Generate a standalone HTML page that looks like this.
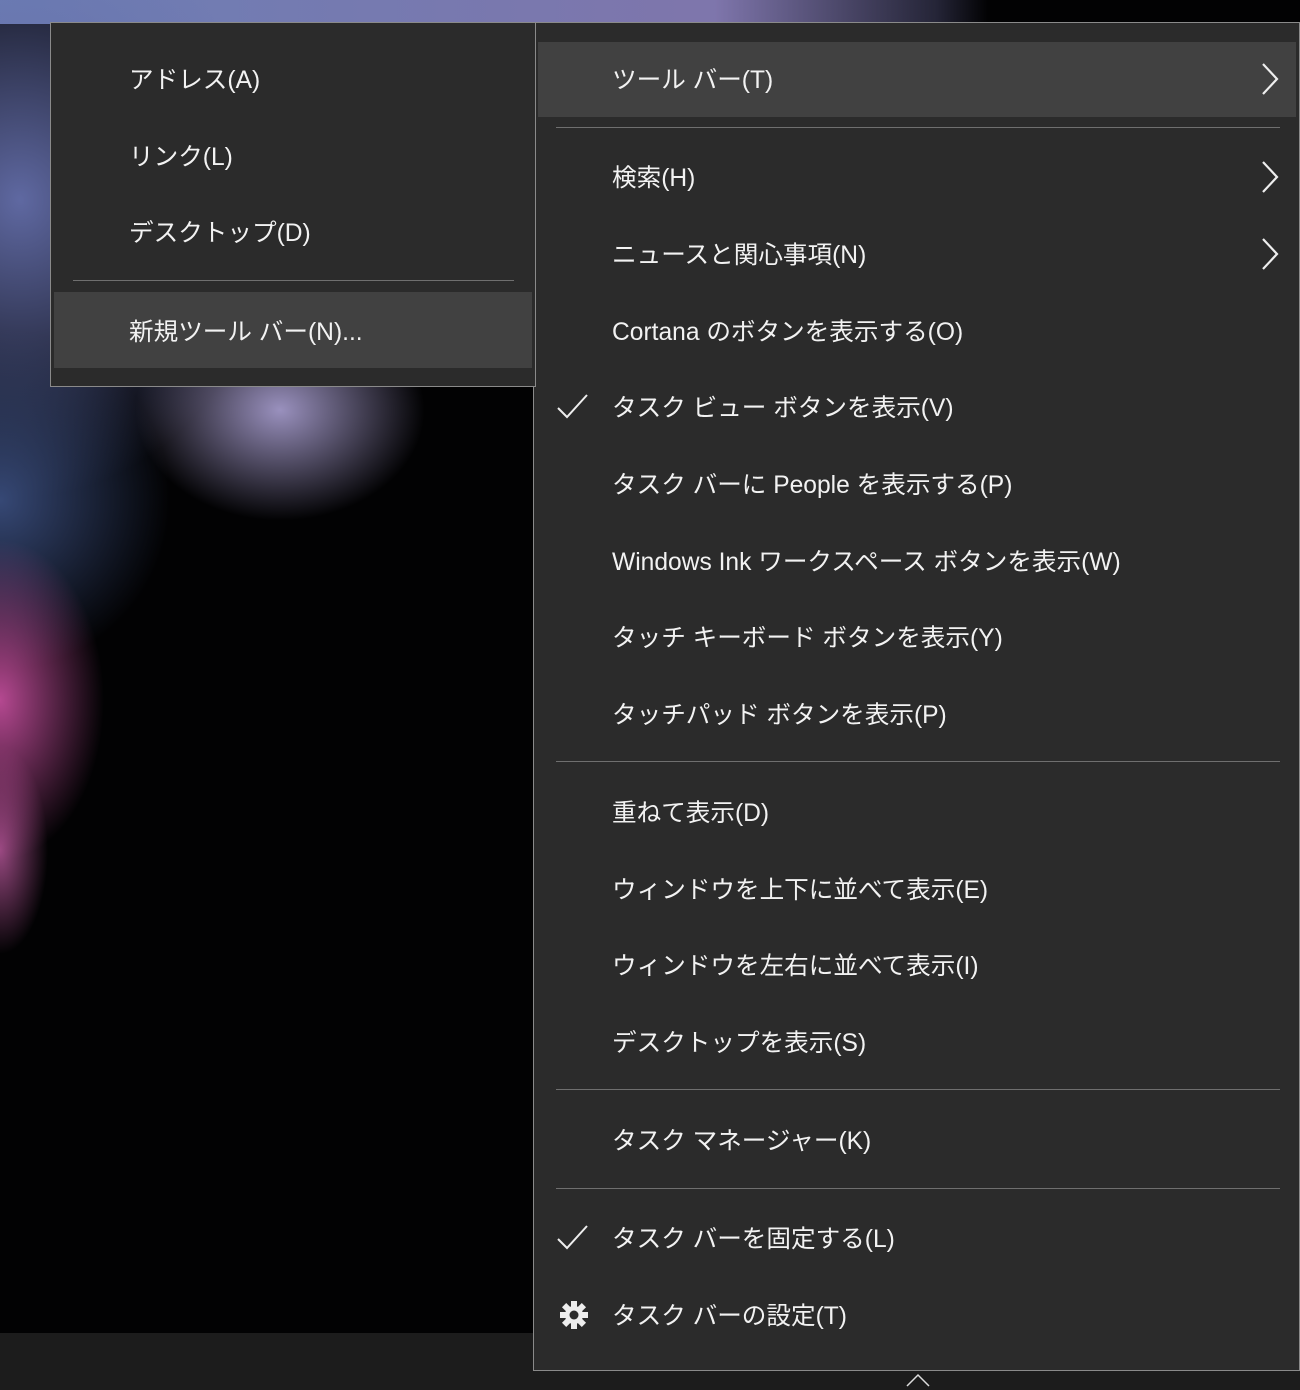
<!DOCTYPE html>
<html><head><meta charset="utf-8"><style>
*{margin:0;padding:0;box-sizing:border-box}
body{width:1300px;height:1390px;overflow:hidden;position:relative;background:#000;font-family:"Liberation Sans","Noto Sans CJK JP",sans-serif;color:#fff}
.bg{position:absolute;left:0;top:0;width:1300px;height:1340px;background:
radial-gradient(ellipse 130px 200px at 0px 700px,rgba(200,80,160,.9),transparent 80%),
radial-gradient(ellipse 60px 130px at 0px 850px,rgba(190,90,160,.8),transparent 80%),
radial-gradient(ellipse 170px 130px at 280px 410px,rgba(170,160,210,.9),transparent 85%),
radial-gradient(ellipse 200px 200px at 0px 500px,rgba(60,80,130,.9),transparent 85%),
radial-gradient(ellipse 300px 350px at 20px 200px,rgba(100,110,170,.95),transparent 85%),
linear-gradient(90deg,rgba(120,140,200,.9) 0,rgba(140,130,190,.9) 55%,rgba(60,60,90,.6) 72%,transparent 76%) 0 0/100% 24px no-repeat,
#020203}
.tb{position:absolute;left:0;top:1333px;width:1300px;height:57px;background:#1c1c1c}
.menu{position:absolute;background:#2b2b2b;border:1px solid #8a8a8a}
.it{position:absolute;font-size:24.6px;line-height:30px;white-space:nowrap;color:#f2f2f2;margin-top:2px}
.sep{position:absolute;height:1px;background:#6f6f6f}
.hl{position:absolute;background:#414141}
.arr{position:absolute}
</style></head><body>
<div class="bg"></div>
<div class="tb"></div>
<svg style="position:absolute;left:905px;top:1372px" width="26" height="18"><path d="M2 14 L13 3 L24 14" fill="none" stroke="#ddd" stroke-width="1.5"/></svg>
<div class="menu" style="left:533px;top:22px;width:767px;height:1349px">
 <div class="hl" style="left:4px;top:19px;width:758px;height:75px"></div>
 <div class="sep" style="left:22px;top:104px;width:724px"></div>
 <div class="sep" style="left:22px;top:738px;width:724px"></div>
 <div class="sep" style="left:22px;top:1066px;width:724px"></div>
 <div class="sep" style="left:22px;top:1165px;width:724px"></div>
</div>
<div class="it" style="left:612px;top:64px">ツール バー(T)</div>
<div class="it" style="left:612px;top:162px">検索(H)</div>
<div class="it" style="left:612px;top:239px">ニュースと関心事項(N)</div>
<div class="it" style="left:612px;top:316px">Cortana のボタンを表示する(O)</div>
<div class="it" style="left:612px;top:392px">タスク ビュー ボタンを表示(V)</div>
<div class="it" style="left:612px;top:469px">タスク バーに People を表示する(P)</div>
<div class="it" style="left:612px;top:546px">Windows Ink ワークスペース ボタンを表示(W)</div>
<div class="it" style="left:612px;top:622px">タッチ キーボード ボタンを表示(Y)</div>
<div class="it" style="left:612px;top:699px">タッチパッド ボタンを表示(P)</div>
<div class="it" style="left:612px;top:797px">重ねて表示(D)</div>
<div class="it" style="left:612px;top:874px">ウィンドウを上下に並べて表示(E)</div>
<div class="it" style="left:612px;top:950px">ウィンドウを左右に並べて表示(I)</div>
<div class="it" style="left:612px;top:1027px">デスクトップを表示(S)</div>
<div class="it" style="left:612px;top:1125px">タスク マネージャー(K)</div>
<div class="it" style="left:612px;top:1223px">タスク バーを固定する(L)</div>
<div class="it" style="left:612px;top:1300px">タスク バーの設定(T)</div>
<svg class="arr" style="left:1260px;top:62px" width="20" height="34"><path d="M3 2 L17 17 L3 32" fill="none" stroke="#eee" stroke-width="2.2"/></svg>
<svg class="arr" style="left:1260px;top:160px" width="20" height="34"><path d="M3 2 L17 17 L3 32" fill="none" stroke="#eee" stroke-width="2.2"/></svg>
<svg class="arr" style="left:1260px;top:237px" width="20" height="34"><path d="M3 2 L17 17 L3 32" fill="none" stroke="#eee" stroke-width="2.2"/></svg>
<svg class="arr" style="left:556px;top:392px" width="34" height="30"><path d="M2 16 L11 25 L31 3" fill="none" stroke="#eee" stroke-width="2"/></svg>
<svg class="arr" style="left:556px;top:1223px" width="34" height="30"><path d="M2 16 L11 25 L31 3" fill="none" stroke="#eee" stroke-width="2"/></svg>
<svg class="arr" style="left:558px;top:1299px" width="32" height="32" viewBox="-16 -16 32 32"><g fill="#eee"><circle r="9"/><rect x="-3" y="-14" width="6" height="28"/><rect x="-3" y="-14" width="6" height="28" transform="rotate(45)"/><rect x="-3" y="-14" width="6" height="28" transform="rotate(90)"/><rect x="-3" y="-14" width="6" height="28" transform="rotate(135)"/></g><circle r="4.5" fill="#2b2b2b"/></svg>
<div class="menu" style="left:50px;top:22px;width:486px;height:365px">
 <div class="hl" style="left:3px;top:269px;width:478px;height:76px"></div>
 <div class="sep" style="left:22px;top:257px;width:441px"></div>
</div>
<div class="it" style="left:129px;top:64px">アドレス(A)</div>
<div class="it" style="left:129px;top:141px">リンク(L)</div>
<div class="it" style="left:129px;top:217px">デスクトップ(D)</div>
<div class="it" style="left:129px;top:316px">新規ツール バー(N)...</div>
</body></html>
